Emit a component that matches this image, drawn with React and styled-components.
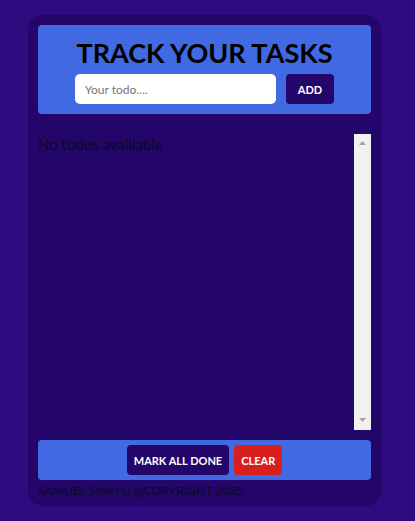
import React, { useState } from 'react';
import styled, { createGlobalStyle } from 'styled-components';

const GlobalStyle = createGlobalStyle`
    html, body {
        margin: 0;
        padding: 0;
        background-color: #2e0b7e;
        font-family: Lato, "Open Sans", sans-serif;
    }
    * {
        box-sizing: border-box;
    }
`;

export default function App() {
    const [todo, setTodo] = useState('');
    const [todos, setTodos] = useState([]);

    const addTodo = () => {
        if (!todo.trim()) return;
        setTodos([...todos, { text: todo, done: false }]);
        setTodo('');
    };

    return (
        <>
            <GlobalStyle />
            <Card>
                <Header>
                    <Title>TRACK YOUR TASKS</Title>
                    <InputRow>
                        <TodoInput
                            placeholder='Your todo....'
                            value={todo}
                            onChange={(e) => setTodo(e.target.value)}
                        />
                        <Button $wide onClick={addTodo}>
                            ADD
                        </Button>
                    </InputRow>
                </Header>
                <List>
                    <Items>
                        {todos.length === 0 ? (
                            <Empty>No todos availlable</Empty>
                        ) : (
                            todos.map((t, i) => (
                                <Empty key={i}>{t.text}</Empty>
                            ))
                        )}
                    </Items>
                    {/* scrollbars are hidden in the browser, so draw one */}
                    <ScrollTrack>
                        <Arrow />
                        <Arrow $down />
                    </ScrollTrack>
                </List>
                <Footer>
                    <Button
                        onClick={() =>
                            setTodos(todos.map((t) => ({ ...t, done: true })))
                        }
                    >
                        MARK ALL DONE
                    </Button>
                    <Button $danger onClick={() => setTodos([])}>
                        CLEAR
                    </Button>
                </Footer>
                <Copyright>SAMUEL SIMIYU @COPYRIGHT 2025</Copyright>
            </Card>
        </>
    );
}

const Card = styled.div`
    width: 353px;
    margin: 15px 0 0 28px;
    padding: 10px 10px 8px;
    background-color: #24066a;
    border-radius: 15px;
`;
const Header = styled.div`
    display: flex;
    flex-direction: column;
    align-items: center;
    gap: 4px;
    padding: 10px;
    background-color: #4169e1;
    border-radius: 4px;
`;
const Title = styled.h1`
    margin: 0;
    font-size: 27px;
    line-height: 35px;
    font-weight: 700;
    color: #000;
`;
const InputRow = styled.div`
    display: flex;
    gap: 10px;
`;
const TodoInput = styled.input`
    width: 201px;
    height: 30px;
    padding: 0 10px;
    border: none;
    border-radius: 5px;
    outline: none;
    font-family: Lato, "Open Sans", sans-serif;
    font-size: 12px;
    color: #333;
    &::placeholder {
        color: #757575;
    }
`;
const Button = styled.button`
    height: 30px;
    padding: 0 ${(props) => (props.$wide ? '12px' : '7px')};
    border: none;
    border-radius: 4px;
    background-color: ${(props) => (props.$danger ? '#d91e1e' : '#24066a')};
    color: #fff;
    font-family: Lato, "Open Sans", sans-serif;
    font-size: 11px;
    font-weight: 700;
    cursor: pointer;
`;
const List = styled.div`
    display: flex;
    height: 296px;
    margin-top: 20px;
`;
const Items = styled.div`
    flex: 1;
    overflow-y: auto;
`;
const ScrollTrack = styled.div`
    display: flex;
    flex-direction: column;
    justify-content: space-between;
    align-items: center;
    width: 17px;
    padding: 7px 0 8px;
    background-color: #f1f1f1;
`;
const Arrow = styled.span`
    display: block;
    width: 7px;
    height: 4px;
    background-color: #a3a3a3;
    clip-path: ${(props) =>
        props.$down
            ? 'polygon(0 0, 100% 0, 50% 100%)'
            : 'polygon(50% 0, 100% 100%, 0 100%)'};
`;
const Empty = styled.p`
    margin: 0;
    padding-top: 2px;
    font-size: 15px;
    line-height: 16px;
    color: #0a0a22;
`;
const Footer = styled.div`
    display: flex;
    justify-content: center;
    gap: 5px;
    margin-top: 10px;
    padding: 5px;
    background-color: #4169e1;
    border-radius: 4px;
`;
const Copyright = styled.p`
    margin: 4px 0 0;
    font-size: 12.2px;
    line-height: 14px;
    color: #0a0a22;
`;
